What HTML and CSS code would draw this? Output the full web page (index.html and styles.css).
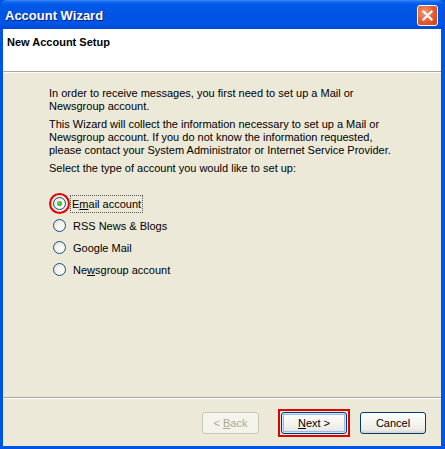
FILE: index.html
```html
<!DOCTYPE html>
<html lang="en">
<head>
    <meta charset="UTF-8">
    <title>Account Wizard</title>
    <link rel="stylesheet" href="styles.css">
</head>
<body>
    <div class="window">
        <div class="titlebar">
            <span class="title">Account Wizard</span>
            <span class="close-btn">
                <svg width="13" height="13" viewBox="0 0 13 13">
                    <path d="M2.5 2.5 L10.5 10.5 M10.5 2.5 L2.5 10.5" stroke="#fff" stroke-width="2.2" stroke-linecap="square"/>
                </svg>
            </span>
        </div>
        <div class="frame">
            <div class="banner"><b>New Account Setup</b></div>
            <div class="separator"></div>
            <div class="content">
                <p>In order to receive messages, you first need to set up a Mail or<br>Newsgroup account.</p>
                <p>This Wizard will collect the information necessary to set up a Mail or<br>Newsgroup account. If you do not know the information requested,<br>please contact your System Administrator or Internet Service Provider.</p>
                <p>Select the type of account you would like to set up:</p>
                <div class="options">
                    <div class="option">
                        <span class="highlight-ring"><span class="radio checked"></span></span>
                        <span class="label focused">E<u>m</u>ail account</span>
                    </div>
                    <div class="option">
                        <span class="radio"></span>
                        <span class="label">RSS News &amp; Blogs</span>
                    </div>
                    <div class="option">
                        <span class="radio"></span>
                        <span class="label">Google Mail</span>
                    </div>
                    <div class="option">
                        <span class="radio"></span>
                        <span class="label">Ne<u>w</u>sgroup account</span>
                    </div>
                </div>
            </div>
            <div class="separator"></div>
            <div class="buttons">
                <button class="btn back" disabled>&lt; <u>B</u>ack</button>
                <span class="highlight-box"><button class="btn default"><u>N</u>ext &gt;</button></span>
                <button class="btn">Cancel</button>
            </div>
        </div>
    </div>
</body>
</html>
```

FILE: styles.css
```css
body {
    margin: 0;
    background: #ece9d8;
    font-family: 'Liberation Sans', Arial, sans-serif;
    font-size: 11px;
    color: #000;
}
.window {
    width: 445px;
    height: 449px;
    display: flex;
    flex-direction: column;
    background: #0054e3;
}
.titlebar {
    height: 29px;
    display: flex;
    align-items: center;
    justify-content: space-between;
    padding: 0 7px 0 5px;
    background: linear-gradient(#3c8cf8 0, #1468f0 2px, #0058e8 5px, #0054e3 45%, #0055e8 80%, #0048d6 100%);
    border-radius: 7px 7px 0 0;
}
.title {
    color: #fff;
    font-weight: bold;
    font-size: 13px;
    text-shadow: 1px 1px 0 #0a1e6e;
    margin-top: 1px;
}
.close-btn {
    width: 19px;
    height: 19px;
    display: flex;
    align-items: center;
    justify-content: center;
    border: 1px solid #fff;
    border-radius: 3px;
    background: radial-gradient(circle at 35% 35%, #f29a78 0, #e35a2f 55%, #c8401a 100%);
    margin-top: 1px;
}
.frame {
    flex: 1;
    display: flex;
    flex-direction: column;
    margin: 0 4px 3px 3px;
    background: #ece9d8;
}
.banner {
    height: 42px;
    background: #fff;
    padding: 7px 0 0 4px;
    box-sizing: border-box;
}
.separator {
    height: 1px;
    border-top: 1px solid #aca899;
    background: #fff;
}
.content {
    flex: 1;
    padding: 14px 0 0 46px;
}
.content p {
    margin: 0 0 5px;
    line-height: 13px;
}
.options {
    margin-top: 22px;
    display: flex;
    flex-direction: column;
    gap: 9px;
}
.option {
    display: flex;
    align-items: center;
    height: 13px;
    margin-left: 4px;
}
.highlight-ring {
    width: 15px;
    height: 15px;
    border: 2px solid #e00000;
    border-radius: 50%;
    display: flex;
    align-items: center;
    justify-content: center;
    margin: -4px 0 -4px -4px;
    padding: 1px;
}
.highlight-ring + .label {
    margin-left: 1px;
}
.radio {
    width: 11px;
    height: 11px;
    border: 1px solid #1c5180;
    border-radius: 50%;
    background: radial-gradient(circle at 65% 65%, #fff 0, #f5f4ee 40%, #dcdad0 100%);
    display: flex;
    align-items: center;
    justify-content: center;
}
.radio.checked::after {
    content: '';
    width: 5px;
    height: 5px;
    border-radius: 50%;
    background: radial-gradient(circle at 40% 40%, #5fd35f, #21a121);
}
.label {
    margin-left: 6px;
    padding: 2px 1px;
}
.label.focused {
    outline: 1px dotted #555;
}
.buttons {
    height: 47px;
    display: flex;
    align-items: center;
    justify-content: flex-end;
    padding-right: 15px;
    gap: 13px;
}
.btn {
    width: 66px;
    height: 22px;
    font-family: inherit;
    font-size: 11px;
    border: 1px solid #003c74;
    border-radius: 3px;
    background: linear-gradient(#fff 0, #f4f4f0 50%, #ecebe6 85%, #d6d0c5 100%);
    color: #000;
    padding: 0;
}
.btn.back {
    width: 57px;
    margin-right: 9px;
}
.btn:disabled {
    border-color: #c9c7ba;
    background: #f5f4ea;
    color: #aca899;
}
.btn.default {
    box-shadow: inset 0 0 0 1px #cee7ff, inset 0 0 0 2px #98b8ea;
}
.highlight-box {
    display: flex;
    padding: 1px;
    border: 2px solid #e00000;
    margin: 0 -3px;
}
```
